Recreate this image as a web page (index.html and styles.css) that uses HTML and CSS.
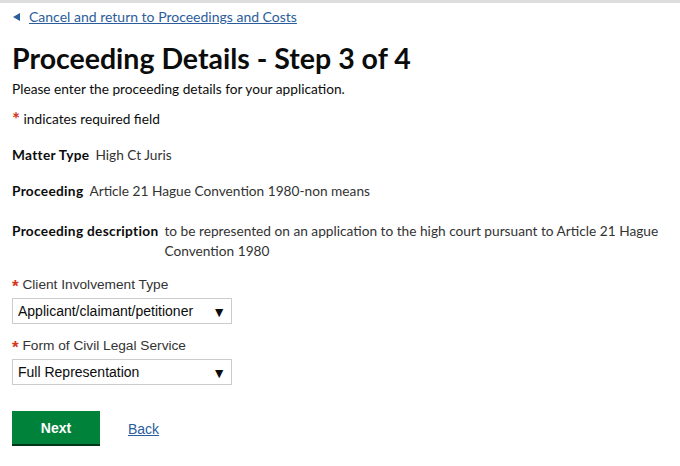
FILE: index.html
```html
<!DOCTYPE html>
<html lang="en">
<head>
    <meta charset="UTF-8" />
    <meta name="viewport" content="width=device-width, initial-scale=1.0"/>
    <title>Proceeding Details</title>
    <link rel="stylesheet" href="styles.css">
</head>
<body>
    <div class="top-bar"></div>
    <main class="page">
        <a href="#" class="back-link">Cancel and return to Proceedings and Costs</a>

        <h1>Proceeding Details - Step 3 of 4</h1>
        <p class="lead">Please enter the proceeding details for your application.</p>

        <p class="required-note"><span class="star">*</span> indicates required field</p>

        <div class="detail">
            <span class="detail-label">Matter Type</span>
            <span class="detail-value">High Ct Juris</span>
        </div>
        <div class="detail">
            <span class="detail-label">Proceeding</span>
            <span class="detail-value">Article 21 Hague Convention 1980-non means</span>
        </div>
        <div class="detail">
            <span class="detail-label">Proceeding description</span>
            <span class="detail-value">to be represented on an application to the high court pursuant to Article 21 Hague Convention 1980</span>
        </div>

        <div class="field">
            <label class="field-label" for="involvement"><span class="star small">*</span> Client Involvement Type</label>
            <div class="select-box">
                <select id="involvement">
                    <option>Applicant/claimant/petitioner</option>
                </select>
                <span class="arrow">&#9660;</span>
            </div>
        </div>

        <div class="field">
            <label class="field-label" for="service"><span class="star small">*</span> Form of Civil Legal Service</label>
            <div class="select-box">
                <select id="service">
                    <option>Full Representation</option>
                </select>
                <span class="arrow">&#9660;</span>
            </div>
        </div>

        <div class="actions">
            <button class="next">Next</button>
            <a href="#" class="back">Back</a>
        </div>
    </main>
</body>
</html>
```

FILE: styles.css
```css
body {
    margin: 0;
    font-family: Lato, "Noto Sans", sans-serif;
    color: #0b0c0c;
    background-color: #fff;
}

.top-bar {
    height: 3px;
    background-color: #dedede;
}

.page {
    padding: 3px 12px 0 12px;
}

.back-link {
    display: inline-block;
    font-size: 14px;
    line-height: 18px;
    color: #2b5d9c;
    padding-left: 17px;
    position: relative;
}

/* little blue triangle before the link */
.back-link::before {
    content: "";
    position: absolute;
    left: 1px;
    top: 5px;
    border-style: solid;
    border-width: 4px 7px 4px 0;
    border-color: transparent #2b5d9c transparent transparent;
}

h1 {
    font-size: 28.5px;
    line-height: 34px;
    font-weight: 700;
    margin: 15px 0 4px 0;
}

.lead {
    font-size: 13.7px;
    line-height: 20px;
    margin: 0 0 10px 0;
}

.required-note {
    font-size: 13.7px;
    line-height: 20px;
    margin: 0 0 16px 0;
}

.star {
    color: #d4351c;
    font-weight: 700;
    font-size: 19px;
    line-height: 10px;
    vertical-align: -2px;
}

.star.small {
    font-size: 17px;
    vertical-align: -3px;
}

.detail {
    display: flex;
    gap: 6px;
    font-size: 13.7px;
    line-height: 20px;
    margin-bottom: 16px;
}

.detail:nth-of-type(2) {
    margin-bottom: 20px;
}

.detail-label {
    font-weight: 700;
    letter-spacing: 0.3px;
    white-space: nowrap;
}

.detail-value {
    color: #333;
}

.field {
    margin-top: 2px;
    margin-bottom: 14px;
}

.field-label {
    display: block;
    font-family: "Liberation Sans", Arial, sans-serif;
    font-size: 13.7px;
    line-height: 16px;
    color: #333;
    margin-bottom: 5px;
}

.select-box {
    position: relative;
    width: 220px;
}

.select-box select {
    width: 100%;
    height: 26px;
    appearance: none;
    border: 1px solid #ccc;
    background-color: #fff;
    font-family: "Liberation Sans", Arial, sans-serif;
    font-size: 14px;
    color: #0b0c0c;
    padding: 0 5px;
}

.select-box .arrow {
    position: absolute;
    right: 6px;
    top: 5px;
    font-size: 14px;
    pointer-events: none;
}

.actions {
    display: flex;
    align-items: center;
    gap: 28px;
    margin-top: 26px;
}

.next {
    width: 88px;
    height: 35px;
    background-color: #00823b;
    color: #fff;
    border: none;
    border-bottom: 2px solid #003618;
    font-family: "Liberation Sans", Arial, sans-serif;
    font-weight: 700;
    font-size: 14px;
    cursor: pointer;
}

.back {
    font-family: "Liberation Sans", Arial, sans-serif;
    font-size: 14px;
    color: #2b5d9c;
}
```
